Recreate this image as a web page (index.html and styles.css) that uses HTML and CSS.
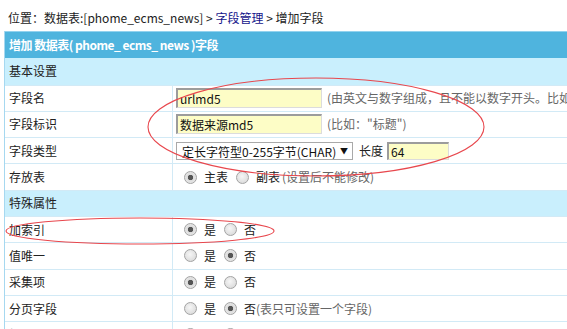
FILE: index.html
```html
<!DOCTYPE html>
<html lang="zh-CN">
<head>
<meta charset="UTF-8" />
<title>增加字段</title>
<link rel="stylesheet" href="styles.css">
</head>
<body>
  <div class="crumb">位置：数据表:[phome_ecms_news] &gt; <a href="#">字段管理</a> &gt; 增加字段</div>

  <div class="board">
    <div class="title">增加 数据表( phome_ ecms_ news )字段</div>
    <div class="section first">基本设置</div>

    <div class="row">
      <div class="label">字段名</div>
      <div class="field"><input class="txt" value="urlmd5"><span class="hint">(由英文与数字组成，且不能以数字开头。比如:"title")</span></div>
    </div>
    <div class="row">
      <div class="label">字段标识</div>
      <div class="field"><input class="txt" value="数据来源md5"><span class="hint">(比如："标题")</span></div>
    </div>
    <div class="row">
      <div class="label">字段类型</div>
      <div class="field">
        <span class="pick">
          <select class="sel"><option>定长字符型0-255字节(CHAR)</option></select>
          <span class="arrow">▼</span>
        </span>
        <span class="len">长度</span><input class="txt short" value="64">
      </div>
    </div>
    <div class="row">
      <div class="label">存放表</div>
      <div class="field">
        <input type="radio" class="rd" name="tb" checked><span>主表</span>
        <input type="radio" class="rd" name="tb"><span>副表</span><span class="hint small">(设置后不能修改)</span>
      </div>
    </div>

    <div class="section">特殊属性</div>

    <div class="row">
      <div class="label">加索引</div>
      <div class="field">
        <input type="radio" class="rd" name="idx" checked><span>是</span>
        <input type="radio" class="rd" name="idx"><span>否</span>
      </div>
    </div>
    <div class="row">
      <div class="label">值唯一</div>
      <div class="field">
        <input type="radio" class="rd" name="uni"><span>是</span>
        <input type="radio" class="rd" name="uni" checked><span>否</span>
      </div>
    </div>
    <div class="row">
      <div class="label">采集项</div>
      <div class="field">
        <input type="radio" class="rd" name="cj" checked><span>是</span>
        <input type="radio" class="rd" name="cj"><span>否</span>
      </div>
    </div>
    <div class="row">
      <div class="label">分页字段</div>
      <div class="field">
        <input type="radio" class="rd" name="fy"><span>是</span>
        <input type="radio" class="rd" name="fy" checked><span>否</span><span class="hint tight">(表只可设置一个字段)</span>
      </div>
    </div>
    <div class="row">
      <div class="label">投稿项</div>
      <div class="field">
        <input type="radio" class="rd" name="tg"><span>是</span>
        <input type="radio" class="rd" name="tg" checked><span>否</span>
      </div>
    </div>
  </div>

  <!-- 红色圈注 -->
  <svg class="marks" width="567" height="329" viewBox="0 0 567 329">
    <ellipse cx="316" cy="127" rx="168" ry="49" />
    <ellipse cx="140" cy="231" rx="134" ry="13" />
  </svg>
</body>
</html>
```

FILE: styles.css
```css
html, body {
  margin: 0;
  overflow: hidden;
  background: #fff;
}
body {
  font: 12px/1.5 "Noto Sans CJK SC", "Noto Sans", sans-serif;
  color: #222;
  width: 567px;
  height: 329px;
  position: relative;
}
.crumb {
  padding: 9px 0 4px 8px;
  line-height: 18px;
  height: 18px;
  white-space: nowrap;
}
.crumb a {
  color: #14148a;
  text-decoration: none;
}
.board {
  margin-left: 4px;
  width: 900px;
  border-left: 1px solid #a6d8f0;
}
.title {
  height: 27px;
  box-sizing: border-box;
  border-top: 1px solid #93d2ee;
  background: #4fb4de;
  color: #fff;
  font-weight: bold;
  letter-spacing: -0.5px;
  padding-left: 4px;
  display: flex;
  align-items: center;
}
.section {
  height: 26.3px;
  box-sizing: border-box;
  border-top: 1px solid #d2eaf6;
  background: #c9effd;
  padding-left: 4px;
  display: flex;
  align-items: center;
}
.section.first {
  height: 26.5px;
  border-top: none;
}
.row {
  display: flex;
  height: 26.3px;
  box-sizing: border-box;
  border-top: 1px solid #d2eaf6;
}
.label {
  width: 168px;
  flex-shrink: 0;
  box-sizing: border-box;
  border-right: 1px solid #d2eaf6;
  padding-left: 4px;
  display: flex;
  align-items: center;
}
.field {
  flex: 1;
  padding-left: 3px;
  display: flex;
  align-items: center;
  white-space: nowrap;
}
.txt {
  width: 146px;
  height: 20px;
  box-sizing: border-box;
  margin: 0;
  padding: 0 2px;
  font: 12px "Noto Sans CJK SC", sans-serif;
  color: #111;
  background: #fdfdc6;
  border-top: 2px solid #9c9c9c;
  border-left: 2px solid #9c9c9c;
  border-right: 1px solid #dcdcdc;
  border-bottom: 1px solid #dcdcdc;
  outline: none;
}
.txt.short {
  width: 62px;
  height: 18px;
}
.hint {
  color: #666;
  margin-left: 5px;
}
.hint.small {
  margin-left: 2px;
}
.hint.tight {
  margin-left: 0;
}
.pick {
  position: relative;
  display: inline-block;
  height: 18px;
}
.sel {
  -webkit-appearance: none;
  appearance: none;
  width: 177px;
  height: 18px;
  box-sizing: border-box;
  margin: 0;
  padding: 0 16px 0 5px;
  border: 1px solid #a9a9a9;
  border-radius: 0;
  background: #fff;
  font: 12px "Noto Sans CJK SC", sans-serif;
  color: #111;
}
.arrow {
  position: absolute;
  right: 5px;
  top: 1px;
  font-size: 8px;
  line-height: 16px;
  color: #111;
  pointer-events: none;
}
.len {
  margin: 0 4px 0 6px;
}
.rd {
  -webkit-appearance: none;
  appearance: none;
  width: 13px;
  height: 13px;
  margin: 0 7px 0 8px;
  border-radius: 50%;
  border: 1px solid #a3a3a3;
  box-sizing: border-box;
  background: radial-gradient(circle at 45% 40%, #f6f6f6 0, #dedede 70%, #cfcfcf 100%);
}
.rd:checked {
  background: radial-gradient(circle, #555 0, #555 2.4px, #dcdcdc 3px, #e6e6e6 70%, #cfcfcf 100%);
}
.marks {
  position: absolute;
  left: 0;
  top: 0;
  pointer-events: none;
}
.marks ellipse {
  fill: none;
  stroke: #e8474d;
  stroke-width: 1.1;
}
```
